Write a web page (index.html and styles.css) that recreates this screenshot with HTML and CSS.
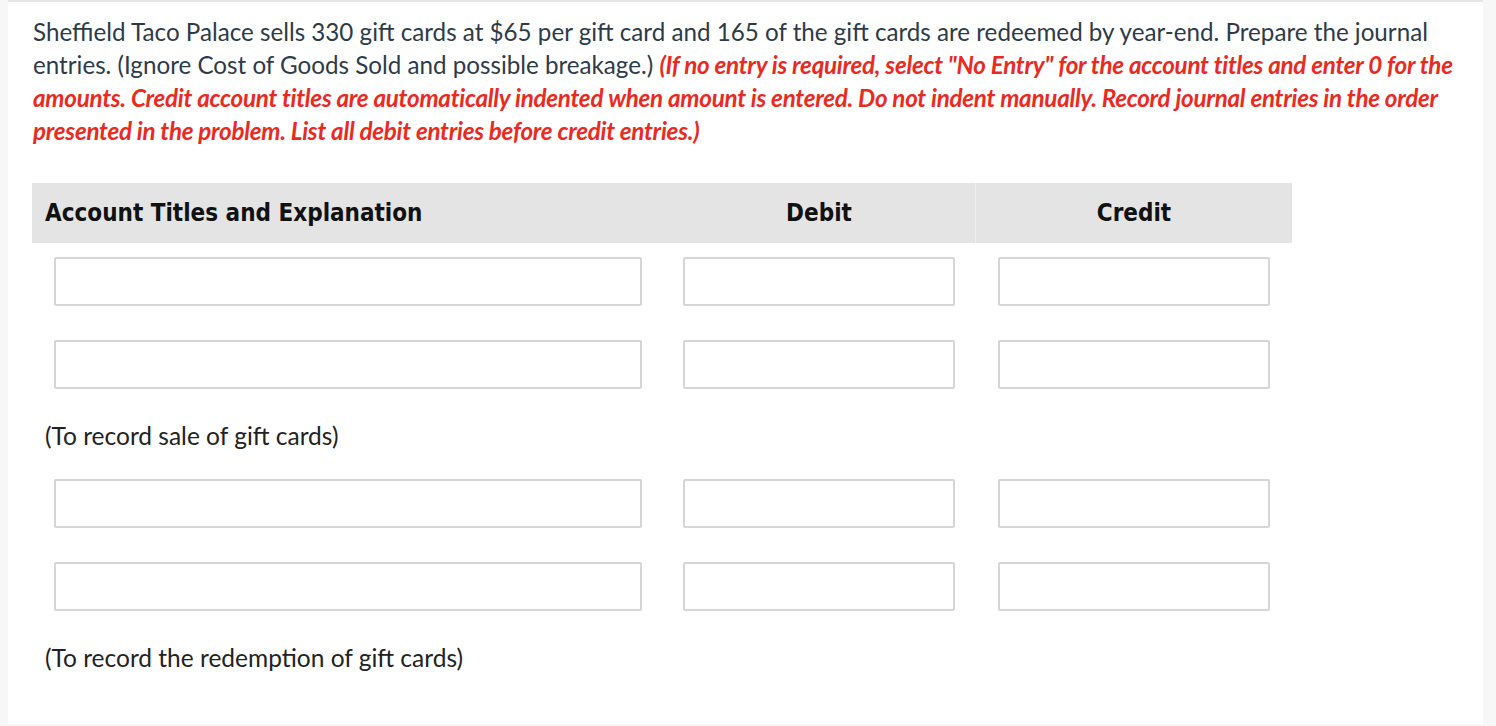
FILE: index.html
```html
<!DOCTYPE html>
<html>
<head>
<meta charset="utf-8">
<link rel="stylesheet" href="styles.css">
</head>
<body>
<div class="panel">
  <p class="question">Sheffield Taco Palace sells 330 gift cards at $65 per gift card and 165 of the gift cards are redeemed by year-end. Prepare the journal entries. (Ignore Cost of Goods Sold and possible breakage.) <em class="note">(If no entry is required, select "No Entry" for the account titles and enter 0 for the amounts. Credit account titles are automatically indented when amount is entered. Do not indent manually. Record journal entries in the order presented in the problem. List all debit entries before credit entries.)</em></p>

  <div class="journal">
    <div class="head">
      <div class="hcell hacct">Account Titles and Explanation</div>
      <div class="hcell hdebit">Debit</div>
      <div class="hcell hcredit">Credit</div>
    </div>

    <div class="row">
      <div class="cell acct"><input class="field" type="text"></div>
      <div class="cell debit"><input class="field" type="text"></div>
      <div class="cell credit"><input class="field" type="text"></div>
    </div>
    <div class="row">
      <div class="cell acct"><input class="field" type="text"></div>
      <div class="cell debit"><input class="field" type="text"></div>
      <div class="cell credit"><input class="field" type="text"></div>
    </div>
    <div class="expl">(To record sale of gift cards)</div>

    <div class="row">
      <div class="cell acct"><input class="field" type="text"></div>
      <div class="cell debit"><input class="field" type="text"></div>
      <div class="cell credit"><input class="field" type="text"></div>
    </div>
    <div class="row">
      <div class="cell acct"><input class="field" type="text"></div>
      <div class="cell debit"><input class="field" type="text"></div>
      <div class="cell credit"><input class="field" type="text"></div>
    </div>
    <div class="expl">(To record the redemption of gift cards)</div>
  </div>
</div>
</body>
</html>
```
FILE: styles.css
```css
html, body {
  margin: 0;
  padding: 0;
  background: #f7f7f8;
}
body {
  font-family: Lato, "Open Sans", sans-serif;
}
.panel {
  margin-left: 8px;
  width: 1475px;
  height: 724px;
  background: #ffffff;
  border-top: 2px solid #e6e6e6;
  box-sizing: border-box;
  overflow: hidden;
}
.question {
  margin: 0;
  padding: 13px 24px 0 25px;
  font-size: 24.2px;
  line-height: 33px;
  color: #2d3b48;
}
.note {
  color: #ea2a21;
  font-weight: bold;
  font-style: italic;
  letter-spacing: -0.25px;
}
.journal {
  margin: 36px 0 0 24px;
  width: 1260px;
}
.head {
  display: grid;
  grid-template-columns: 631px 313px 316px;
  height: 60px;
  background: #e4e4e4;
}
.hcell {
  display: flex;
  align-items: center;
  font-family: "DejaVu Sans", sans-serif;
  font-stretch: condensed;
  font-weight: bold;
  font-size: 24px;
  color: #111;
}
.hacct {
  padding-left: 13px;
}
.hdebit {
  justify-content: center;
  border-right: 1px solid #efefef;
}
.hcredit {
  justify-content: center;
}
.row {
  display: grid;
  grid-template-columns: 631px 313px 316px;
  padding: 14px 0 20px;
}
.cell {
  display: flex;
}
.acct {
  padding: 0 21px 0 22px;
}
.debit {
  padding: 0 21px 0 20px;
}
.credit {
  padding: 0 22px 0 22px;
}
.field {
  width: 100%;
  height: 49px;
  box-sizing: border-box;
  margin: 0;
  border: 2px solid #d6d6d6;
  border-radius: 2px;
  background: #fff;
  font-family: Lato, sans-serif;
  font-size: 18px;
  outline: none;
}
.expl {
  height: 56px;
  box-sizing: border-box;
  padding: 0 0 4px 13px;
  display: flex;
  align-items: center;
  font-size: 24.5px;
  color: #222;
}
```
